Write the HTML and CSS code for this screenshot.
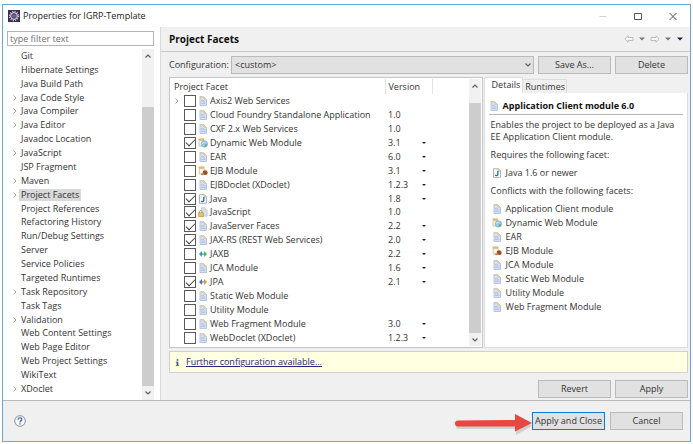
FILE: index.html
```html
<!DOCTYPE html>
<html lang="en">
<head>
<meta charset="utf-8">
<title>Properties for IGRP-Template</title>
<link rel="stylesheet" href="styles.css">
</head>
<body>
<svg class="sprite" aria-hidden="true">
  <symbol id="doc" viewBox="0 0 10 10">
    <path d="M2 1h4l2.500 2.500V9.500H2z" fill="#d6e1f4" stroke="#b9c5de" stroke-width="1"/>
    <path d="M1.500 .5H6" stroke="#d9cda6"/>
    <path d="M6 1v2.500h2.500z" fill="#f1d58c" stroke="#d6c48c" stroke-width=".6"/>
    <path d="M3 4.500h3M3 6h4.500M3 7.500h4.500" stroke="#aebfe2" stroke-width=".8"/>
  </symbol>
  <symbol id="java" viewBox="0 0 10 10">
    <path d="M1.500 .7h5l2 2V9.400h-7z" fill="#f4f9fe" stroke="#a9b4ba"/>
    <path d="M6 .7v2.200h2.500" fill="#efd68f" stroke="#c9b06a" stroke-width=".7"/>
    <path d="M5.800 3v3.300q0 1.400-1.300 1.400-1 0-1.200-.9" fill="none" stroke="#2468a8" stroke-width="1.300"/>
  </symbol>
  <symbol id="web" viewBox="0 0 10 10">
    <path d="M1 2.500h5V8H1z" fill="#f5f5ee" stroke="#b9b7a6" stroke-width=".7"/>
    <path d="M.5 .4h5.500v2H.5z" fill="#e4bd63"/>
    <circle cx="6.400" cy="6" r="3.200" fill="#9ccbe2" stroke="#6d9ab8" stroke-width=".5"/>
    <path d="M6.500 7l2.300-1.300q.4 2.200-1.600 3z" fill="#5aa564"/>
    <path d="M4.200 5.500q1-1.500 2.300-1" stroke="#e6f5fb" fill="none" stroke-width="1"/>
  </symbol>
  <symbol id="ejb" viewBox="0 0 10 10">
    <path d="M1.200 2.500h5V8h-5z" fill="#f5f5ee" stroke="#b9b7a6" stroke-width=".7"/>
    <path d="M.5 .4h6v2h-6z" fill="#e4bd63"/>
    <ellipse cx="7.200" cy="6.700" rx="2.500" ry="2.400" fill="#a1582d"/>
    <path d="M5.200 5.400q2.300 0 3.600 2.800" stroke="#6f3c1c" stroke-width=".7" fill="none"/>
    <ellipse cx="4.500" cy="8.200" rx="1.600" ry="1" fill="#c9824b"/>
  </symbol>
  <symbol id="lock" viewBox="0 0 12 12">
    <path d="M4 1h4l3 3v7H4z" fill="#d6e1f4" stroke="#b9c5de"/>
    <path d="M8 1v3h3z" fill="#f1d58c"/>
    <path d="M1.800 7.500V5.800q0-1.600 1.600-1.600T5 5.800v1.700" fill="none" stroke="#b39a4c"/>
    <path d="M.5 7h6v4.500h-6z" fill="#edc958" stroke="#a98834" stroke-width=".7"/>
  </symbol>
  <symbol id="jaxb" viewBox="0 0 10 10">
    <path d="M1 5 4 2v6z" fill="#3e8fc4"/><path d="M3.500 4.300h1.300v1.400H3.500z" fill="#3e8fc4"/>
    <path d="M9 5 6 2v6z" fill="#44b562"/><path d="M5.200 4.300h1.300v1.400H5.200z" fill="#44b562"/>
  </symbol>
  <symbol id="jpa" viewBox="0 0 10 10">
    <path d="M1 5 4 2v6z" fill="#4379b8"/><path d="M3.500 4.300h1.300v1.400H3.500z" fill="#4379b8"/>
    <path d="M9 5 6 2v6z" fill="#d6953c"/><path d="M5.200 4.300h1.300v1.400H5.200z" fill="#d6953c"/>
  </symbol>
  <symbol id="exp" viewBox="0 0 6 6"><path d="M1.500 .5 4 3 1.500 5.500" fill="none" stroke="#a6a6a6"/></symbol>
  <symbol id="up" viewBox="0 0 8 8"><path d="M1.500 5.500 4 3l2.500 2.500" fill="none" stroke="#606060" stroke-width="1.200"/></symbol>
  <symbol id="down" viewBox="0 0 8 8"><path d="M1.500 2.500 4 5l2.500-2.500" fill="none" stroke="#606060" stroke-width="1.200"/></symbol>
  <symbol id="tri" viewBox="0 0 6 4"><path d="M0 .5h6L3 3.500z" fill="currentColor"/></symbol>
</svg>

<div class="dialog">
  <header class="titlebar">
    <svg class="app-icon" viewBox="0 0 12 12" aria-hidden="true">
      <path d="M0 0h12v12H0z" fill="#3a2c57"/>
      <circle cx="6" cy="6" r="4.600" fill="none" stroke="#c9c4d6" stroke-width="1.200" stroke-dasharray="1.200 1.200"/>
      <circle cx="6" cy="6" r="3.400" fill="#51446e" stroke="#e8e6ee" stroke-width="1"/>
      <path d="M3.200 5.200h5.600M3.200 6.800h5.600" stroke="#8e85a6" stroke-width=".6"/>
    </svg>
    <h1>Properties for IGRP-Template</h1>
    <button class="win" aria-label="Minimize"><svg viewBox="0 0 10 10"><path d="M1.500 5.500h7" stroke="#d4d4d4"/></svg></button>
    <button class="win" aria-label="Maximize"><svg viewBox="0 0 10 10"><path d="M1.500 2.500h7v6h-7z" fill="none" stroke="#555"/></svg></button>
    <button class="win" aria-label="Close"><svg viewBox="0 0 10 10"><path d="M1.500 2 8.500 9M8.500 2 1.500 9" stroke="#555"/></svg></button>
  </header>

  <div class="main">
    <nav class="side">
      <input class="filter" type="text" placeholder="type filter text" aria-label="Filter">
      <div class="tree-wrap">
        <ul class="tree">
          <li>Git</li>
          <li>Hibernate Settings</li>
          <li>Java Build Path</li>
          <li><svg><use href="#exp"/></svg>Java Code Style</li>
          <li><svg><use href="#exp"/></svg>Java Compiler</li>
          <li><svg><use href="#exp"/></svg>Java Editor</li>
          <li>Javadoc Location</li>
          <li><svg><use href="#exp"/></svg>JavaScript</li>
          <li>JSP Fragment</li>
          <li><svg><use href="#exp"/></svg>Maven</li>
          <li><svg><use href="#exp"/></svg><span class="selected">Project Facets</span></li>
          <li>Project References</li>
          <li>Refactoring History</li>
          <li>Run/Debug Settings</li>
          <li>Server</li>
          <li>Service Policies</li>
          <li>Targeted Runtimes</li>
          <li><svg><use href="#exp"/></svg>Task Repository</li>
          <li>Task Tags</li>
          <li><svg><use href="#exp"/></svg>Validation</li>
          <li>Web Content Settings</li>
          <li>Web Page Editor</li>
          <li>Web Project Settings</li>
          <li>WikiText</li>
          <li><svg><use href="#exp"/></svg>XDoclet</li>
        </ul>
        <div class="scroll side-scroll"><svg><use href="#up"/></svg><i class="thumb"></i><svg><use href="#down"/></svg></div>
      </div>
    </nav>

    <section class="page">
      <div class="page-head">
        <h2>Project Facets</h2>
        <button class="nav-btn" aria-label="Back"><svg class="arrow" viewBox="0 0 10 8"><path d="M.8 4 4 .8v1.700h5v3H4v1.700z" fill="#f7f7f7" stroke="#b5b5b5" stroke-width=".9"/></svg></button>
        <button class="nav-btn grey" aria-label="Back history"><svg class="tri"><use href="#tri"/></svg></button>
        <button class="nav-btn" aria-label="Forward"><svg class="arrow" viewBox="0 0 10 8"><path d="M9.200 4 6 .8v1.700H1v3h5v1.700z" fill="#f7f7f7" stroke="#b5b5b5" stroke-width=".9"/></svg></button>
        <button class="nav-btn grey" aria-label="Forward history"><svg class="tri"><use href="#tri"/></svg></button>
        <button class="nav-btn dark" aria-label="View menu"><svg class="tri"><use href="#tri"/></svg></button>
      </div>

      <div class="content">
        <div class="config">
          <label for="config">Configuration:</label>
          <div class="select">
            <select id="config"><option>&lt;custom&gt;</option></select>
            <svg aria-hidden="true"><use href="#down"/></svg>
          </div>
          <button class="btn">Save As...</button>
          <button class="btn">Delete</button>
        </div>

        <div class="panes">
          <div class="facets">
            <table>
              <thead><tr><th>Project Facet</th><th>Version</th><th></th></tr></thead>
              <tbody>
                <tr><td><label><svg class="exp"><use href="#exp"/></svg><input type="checkbox"><svg class="ico"><use href="#doc"/></svg>Axis2 Web Services</label></td><td></td><td></td></tr>
                <tr><td><label><input type="checkbox"><svg class="ico"><use href="#doc"/></svg>Cloud Foundry Standalone Application</label></td><td>1.0</td><td></td></tr>
                <tr><td><label><input type="checkbox"><svg class="ico"><use href="#doc"/></svg>CXF 2.x Web Services</label></td><td>1.0</td><td></td></tr>
                <tr><td><label><input type="checkbox" checked><svg class="ico"><use href="#web"/></svg>Dynamic Web Module</label></td><td><div class="ver">3.1<button aria-label="Change version"></button></div></td><td></td></tr>
                <tr><td><label><input type="checkbox"><svg class="ico"><use href="#doc"/></svg>EAR</label></td><td><div class="ver">6.0<button aria-label="Change version"></button></div></td><td></td></tr>
                <tr><td><label><input type="checkbox"><svg class="ico"><use href="#ejb"/></svg>EJB Module</label></td><td><div class="ver">3.1<button aria-label="Change version"></button></div></td><td></td></tr>
                <tr><td><label><input type="checkbox"><svg class="ico"><use href="#doc"/></svg>EJBDoclet (XDoclet)</label></td><td><div class="ver">1.2.3<button aria-label="Change version"></button></div></td><td></td></tr>
                <tr><td><label><input type="checkbox" checked><svg class="ico"><use href="#java"/></svg>Java</label></td><td><div class="ver">1.8<button aria-label="Change version"></button></div></td><td></td></tr>
                <tr><td><label><input type="checkbox" checked><svg class="ico"><use href="#lock"/></svg>JavaScript</label></td><td>1.0</td><td></td></tr>
                <tr><td><label><input type="checkbox" checked><svg class="ico"><use href="#doc"/></svg>JavaServer Faces</label></td><td><div class="ver">2.2<button aria-label="Change version"></button></div></td><td></td></tr>
                <tr><td><label><input type="checkbox" checked><svg class="ico"><use href="#doc"/></svg>JAX-RS (REST Web Services)</label></td><td><div class="ver">2.0<button aria-label="Change version"></button></div></td><td></td></tr>
                <tr><td><label><input type="checkbox"><svg class="ico"><use href="#jaxb"/></svg>JAXB</label></td><td><div class="ver">2.2<button aria-label="Change version"></button></div></td><td></td></tr>
                <tr><td><label><input type="checkbox"><svg class="ico"><use href="#doc"/></svg>JCA Module</label></td><td><div class="ver">1.6<button aria-label="Change version"></button></div></td><td></td></tr>
                <tr><td><label><input type="checkbox" checked><svg class="ico"><use href="#jpa"/></svg>JPA</label></td><td><div class="ver">2.1<button aria-label="Change version"></button></div></td><td></td></tr>
                <tr><td><label><input type="checkbox"><svg class="ico"><use href="#doc"/></svg>Static Web Module</label></td><td></td><td></td></tr>
                <tr><td><label><input type="checkbox"><svg class="ico"><use href="#doc"/></svg>Utility Module</label></td><td></td><td></td></tr>
                <tr><td><label><input type="checkbox"><svg class="ico"><use href="#doc"/></svg>Web Fragment Module</label></td><td><div class="ver">3.0<button aria-label="Change version"></button></div></td><td></td></tr>
                <tr><td><label><input type="checkbox"><svg class="ico"><use href="#doc"/></svg>WebDoclet (XDoclet)</label></td><td><div class="ver">1.2.3<button aria-label="Change version"></button></div></td><td></td></tr>
              </tbody>
            </table>
            <div class="scroll facet-scroll"><svg><use href="#up"/></svg><i class="thumb"></i><svg><use href="#down"/></svg></div>
          </div>

          <div class="details">
            <div class="tabs" role="tablist">
              <button role="tab" class="active" aria-selected="true">Details</button>
              <button role="tab" aria-selected="false">Runtimes</button>
            </div>
            <div class="panel" role="tabpanel">
              <h3><svg class="ico"><use href="#doc"/></svg>Application Client module 6.0</h3>
              <p>Enables the project to be deployed as a Java EE Application Client module.</p>
              <p>Requires the following facet:</p>
              <ul>
                <li><svg class="ico"><use href="#java"/></svg>Java 1.6 or newer</li>
              </ul>
              <p>Conflicts with the following facets:</p>
              <ul>
                <li><svg class="ico"><use href="#doc"/></svg>Application Client module</li>
                <li><svg class="ico"><use href="#web"/></svg>Dynamic Web Module</li>
                <li><svg class="ico"><use href="#doc"/></svg>EAR</li>
                <li><svg class="ico"><use href="#ejb"/></svg>EJB Module</li>
                <li><svg class="ico"><use href="#doc"/></svg>JCA Module</li>
                <li><svg class="ico"><use href="#doc"/></svg>Static Web Module</li>
                <li><svg class="ico"><use href="#doc"/></svg>Utility Module</li>
                <li><svg class="ico"><use href="#doc"/></svg>Web Fragment Module</li>
              </ul>
            </div>
          </div>
        </div>

        <div class="notice">
          <svg viewBox="0 0 6 10" aria-hidden="true"><path d="M2 1h2v2H2zM1 4h3v4h1v1H1V8h1V5H1z" fill="#35508f"/></svg>
          <a href="#">Further configuration available...</a>
        </div>

        <div class="actions">
          <button class="btn">Revert</button>
          <button class="btn">Apply</button>
        </div>
      </div>
    </section>
  </div>

  <footer class="footer">
    <button class="help" aria-label="Help"><svg viewBox="0 0 12 12"><circle cx="6" cy="6" r="5.300" fill="#f8fafc" stroke="#7286a3" stroke-width=".9"/><path d="M4.200 4.700q0-1.800 1.800-1.800t1.800 1.500q0 .9-1 1.500T6 7.300M6 8.300v1.300" fill="none" stroke="#4f6a92" stroke-width="1.300"/></svg></button>
    <svg class="callout" viewBox="0 0 78 22" aria-hidden="true">
      <g fill="#b9b9b9" opacity=".6"><path d="M5 10h57V4l16 9-16 9v-6H5a3 3 0 0 1 0-6z"/></g>
      <path d="M4 7.500 61 7V1l17 9-17 8.500V13.500H4a3 3 0 0 1 0-6z" fill="#e8483f"/>
    </svg>
    <button class="btn default">Apply and Close</button>
    <button class="btn">Cancel</button>
  </footer>
</div>
</body>
</html>
```
FILE: styles.css
```css
* { box-sizing: border-box; }

body {
  margin: 0;
  height: 100vh;
  padding: 4px 2px 2px;
  background: #fff;
  color: #333;
  font: 9px/12px "Open Sans", "Noto Sans", sans-serif;
}

h1, h2, h3, p, ul { margin: 0; padding: 0; font-size: inherit; }
ul { list-style: none; }
button, input, select { font: inherit; color: inherit; }
button { padding: 0; border: 0; background: none; }
svg { display: block; flex: none; }
.sprite { position: absolute; width: 0; height: 0; }
.ico { width: 10px; height: 10px; }

.dialog {
  display: flex;
  flex-direction: column;
  height: 100%;
  border: 1px solid #62a9dc;
}

/* Title bar */
.titlebar {
  display: flex;
  align-items: center;
  height: 22px;
  padding: 0 12px 0 5px;
}
.app-icon { width: 12px; height: 12px; margin-right: 3px; }
.titlebar h1 { flex: 1; font-weight: 400; color: #222; }
.win { margin-left: 25px; }
.win svg { width: 10px; height: 10px; }

.main { display: flex; flex: 1; min-height: 0; }

/* Category tree */
.side {
  display: flex;
  flex-direction: column;
  width: 158px;
  padding: 4px 6px 0 4px;
  border-right: 1px solid #d9d9d9;
}
.filter {
  width: 100%;
  height: 15px;
  padding: 0 2px;
  border: 1px solid #b4b4b4;
  outline: 0;
}
.filter::placeholder { color: #6f6f6f; opacity: 1; }
.tree-wrap { display: flex; flex: 1; min-height: 0; padding-top: 3px; }
.tree {
  display: flex;
  flex: 1;
  flex-direction: column;
  padding-bottom: 4px;
}
.tree li {
  display: flex;
  flex: 1;
  align-items: center;
  position: relative;
  min-height: 0;
  padding-left: 14px;
  white-space: nowrap;
}
.tree svg { position: absolute; left: 5px; width: 6px; height: 6px; }
.selected { margin-left: -2px; padding: 0 2px; background: #d9d9d9; }

.scroll {
  display: flex;
  flex-direction: column;
  align-items: center;
  width: 12px;
  background: #f1f1f1;
}
.scroll svg { width: 8px; height: 8px; }
.thumb { flex: 1; width: 100%; background: #cdcdcd; }
.side-scroll { padding: 3px 0; }
.side-scroll .thumb { margin: 47px 0 3px; }

/* Page */
.page {
  display: flex;
  flex: 1;
  flex-direction: column;
  min-width: 0;
  background: #f0f0f0;
}
.page-head {
  display: flex;
  align-items: center;
  height: 25px;
  padding: 0 7px 0 8px;
  border-bottom: 1px solid #c9c9c9;
}
.page-head h2 { flex: 1; font-size: 10px; color: #111; }
.nav-btn { margin-left: 5px; }
.arrow { width: 10px; height: 8px; }
.tri { width: 6px; height: 4px; }
.grey { color: #777; }
.dark { margin-left: 6px; color: #2a1a44; }

.content {
  display: flex;
  flex: 1;
  flex-direction: column;
  min-height: 0;
  padding: 4px 2px 2px 8px;
}

.config { display: flex; align-items: center; gap: 4px; }
.config label { width: 58px; }
.select { display: flex; flex: 1; align-items: center; position: relative; }
.select select {
  appearance: none;
  width: 100%;
  height: 18px;
  padding: 0 3px;
  border: 1px solid #bababa;
  border-radius: 0;
  background: #e1e1e1;
}
.select svg { position: absolute; right: 2px; width: 8px; height: 8px; }
.btn {
  width: 73px;
  height: 18px;
  border: 1px solid #bababa;
  background: #e1e1e1;
  line-height: 14px;
}

.panes {
  display: flex;
  flex: 1;
  gap: 1px;
  min-height: 0;
  padding-top: 3px;
}

/* Facet table */
.facets {
  display: flex;
  flex: 312;
  min-width: 0;
  padding: 1px;
  border: 1px solid #c3c5ca;
  background: #fff;
}
table {
  flex: 1;
  height: 100%;
  border-collapse: collapse;
  table-layout: fixed;
}
th, td { padding: 0; text-align: left; white-space: nowrap; line-height: 12px; }
th { height: 15px; padding-left: 3px; border-right: 1px solid #e3e3e3; font-weight: 400; }
th:first-child { width: 214px; }
th:nth-child(2) { width: 47px; }
th:last-child { border: 0; }
td:nth-child(2) { padding-left: 3px; }
tbody tr:last-child td { border-bottom: 1px solid #fff; }
td label { display: flex; align-items: center; gap: 2px; position: relative; padding-left: 13px; }
.exp { position: absolute; left: 3px; width: 6px; height: 6px; }
input[type="checkbox"] {
  appearance: none;
  display: grid;
  place-items: center;
  flex: none;
  width: 12px;
  height: 12px;
  margin: 0;
  border: 1px solid #5a5a5a;
  background: #fff;
}
input[type="checkbox"]:checked::after {
  content: "";
  width: 8px;
  height: 4px;
  margin-bottom: 2px;
  border: solid #444;
  border-width: 0 0 1px 1px;
  transform: rotate(-45deg);
}
.ver { display: flex; align-items: center; justify-content: space-between; padding-right: 6px; }
.ver button {
  border: 2px solid transparent;
  border-top-color: #222;
  border-bottom: 0;
}
.facet-scroll { padding: 3px 0 2px; }
.facet-scroll .thumb { margin: 13px 0 3px; }

/* Details */
.details { display: flex; flex: 206; flex-direction: column; min-width: 0; }
.tabs { display: flex; align-items: flex-end; height: 16px; }
.tabs button {
  height: 14px;
  padding: 0 1px 0 2px;
  border: 1px solid #dcdcdc;
  border-width: 1px 1px 0 0;
}
.tabs .active { height: 16px; padding: 0 2px 2px 7px; border-left-width: 1px; background: #fff; }
.panel {
  flex: 1;
  padding: 5px 4px 0 4px;
  border: 1px solid #dcdcdc;
  border-top: 0;
  background: #fff;
}
.panel h3 {
  display: flex;
  align-items: center;
  gap: 4px;
  height: 17px;
  margin-bottom: 4px;
  border-bottom: 1px solid #b5b5b5;
  color: #111;
}
.panel p { margin-bottom: 6px; padding-left: 2px; }
.panel ul { margin-bottom: 5px; padding-left: 3px; }
.panel li { display: flex; align-items: center; gap: 4px; height: 14px; }
.panel p + ul { margin-top: -1px; }

.notice {
  display: flex;
  align-items: center;
  gap: 6px;
  height: 22px;
  margin-top: 3px;
  padding-left: 5px;
  border: 1px solid #cfd0d6;
  background: #ffffe1;
}
.notice svg { width: 5px; height: 9px; }
.notice a { color: #26267a; }

.actions { display: flex; justify-content: flex-end; gap: 4px; padding-top: 7px; }

/* Footer */
.footer {
  display: flex;
  align-items: center;
  height: 41px;
  padding: 0 7px 0 11px;
  border-top: 1px solid #b9b9b9;
  background: #f0f0f0;
}
.help { margin-right: auto; }
.help svg { width: 12px; height: 12px; }
.callout { width: 78px; height: 22px; margin-top: 5px; }
.default { margin-right: 5px; border: 1px solid #0f78d0; }
```
